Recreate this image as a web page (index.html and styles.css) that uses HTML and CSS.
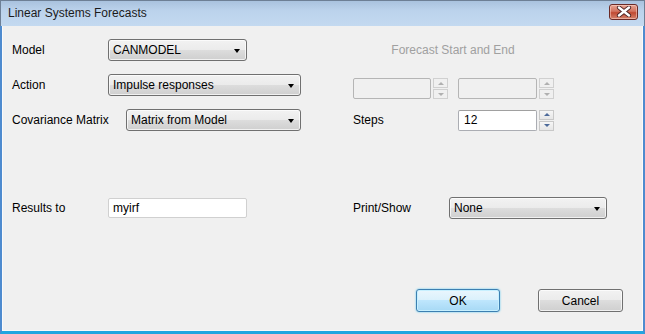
FILE: index.html
```html
<!DOCTYPE html>
<html lang="en">
<head>
  <meta charset="UTF-8">
  <title>Linear Systems Forecasts</title>
  <link rel="stylesheet" href="styles.css">
</head>
<body>
  <div class="window">
    <div class="titlebar">
      <span class="title">Linear Systems Forecasts</span>
      <div class="close">
        <svg width="16" height="11" viewBox="0 0 16 11">
          <path d="M3 1.5 L13 9.5 M13 1.5 L3 9.5" stroke="#4a2222" stroke-width="4.2" stroke-linecap="round"/>
          <path d="M3 1.5 L13 9.5 M13 1.5 L3 9.5" stroke="#ffffff" stroke-width="2.4" stroke-linecap="round"/>
        </svg>
      </div>
    </div>

    <div class="content">
      <div class="row r1">
        <div class="left">
          <span class="lbl">Model</span>
          <div class="combo model">CANMODEL<i class="arrow"></i></div>
        </div>
        <div class="right">
          <div class="caption">Forecast Start and End</div>
        </div>
      </div>

      <div class="row r2">
        <div class="left">
          <span class="lbl">Action</span>
          <div class="combo action">Impulse responses<i class="arrow"></i></div>
        </div>
        <div class="right spins">
          <div class="spinbox first">
            <div class="field off"></div>
            <div class="spin off"><span class="up"></span><span class="down"></span></div>
          </div>
          <div class="spinbox">
            <div class="field off wide"></div>
            <div class="spin off"><span class="up"></span><span class="down"></span></div>
          </div>
        </div>
      </div>

      <div class="row r3">
        <div class="left">
          <span class="lbl cov">Covariance Matrix</span>
          <div class="combo cov-combo">Matrix from Model<i class="arrow"></i></div>
        </div>
        <div class="right">
          <span class="lbl steps">Steps</span>
          <div class="spinbox">
            <div class="field wide">12</div>
            <div class="spin"><span class="up"></span><span class="down"></span></div>
          </div>
        </div>
      </div>

      <div class="row r4">
        <div class="left">
          <span class="lbl">Results to</span>
          <div class="field results">myirf</div>
        </div>
        <div class="right">
          <span class="lbl print">Print/Show</span>
          <div class="combo print-combo">None<i class="arrow"></i></div>
        </div>
      </div>

      <div class="row buttons">
        <button class="btn ok">OK</button>
        <button class="btn cancel">Cancel</button>
      </div>
    </div>
  </div>
</body>
</html>
```

FILE: styles.css
```css
body {
  margin: 0;
  font-family: 'Liberation Sans', Arial, sans-serif;
  font-size: 12px;
  color: #000;
  background: #f0f0f0;
}
.window {
  width: 645px;
  height: 334px;
  display: flex;
  flex-direction: column;
  box-sizing: border-box;
}
.titlebar {
  height: 26px;
  flex: none;
  display: flex;
  align-items: center;
  justify-content: space-between;
  padding: 0 6px 0 7px;
  box-sizing: border-box;
  background: linear-gradient(#a9c2de, #bcd3ec 40%, #c3d9f0);
  border-top: 1px solid #6d7f95;
  border-left: 1px solid #6d7f95;
  border-right: 1px solid #6d7f95;
}
.title {
  color: #1b1b1b;
  font-size: 12px;
  margin-top: -2px;
}
.close {
  width: 29px;
  height: 16px;
  margin-top: -4px;
  box-sizing: border-box;
  border: 1px solid #6b2a26;
  border-radius: 3px;
  background: linear-gradient(#e8a493, #d1725e 45%, #c04a32 55%, #d4826c);
  display: flex;
  align-items: center;
  justify-content: center;
  box-shadow: inset 0 0 0 1px rgba(255, 220, 210, 0.5);
}
.content {
  flex: 1;
  background: #f0f0f0;
  border-left: 2px solid #4e8bcf;
  border-right: 2px solid #4e8bcf;
  border-bottom: 3px solid #23a6e0;
  box-shadow: inset 1px 0 0 #fafafa, inset -1px 0 0 #fafafa, inset 0 -1px 0 #fafafa;
  padding: 13px 0 0 10px;
}
.row {
  display: flex;
  height: 22px;
  align-items: center;
}
.r2, .r3 { margin-top: 13px; }
.r4 { margin-top: 66px; }
.left {
  width: 341px;
  display: flex;
  align-items: center;
}
.right {
  display: flex;
  align-items: center;
}
.lbl {
  width: 96px;
  flex: none;
}
.lbl.cov { width: 114px; }
.lbl.steps { width: 105px; }
.caption {
  width: 200px;
  text-align: center;
  color: #a0a0a0;
  margin-top: -1px;
}
.combo {
  position: relative;
  height: 22px;
  box-sizing: border-box;
  border: 1px solid #707070;
  border-radius: 3px;
  background: linear-gradient(#f2f2f2, #ebebeb 50%, #dddddd 50%, #cfcfcf);
  box-shadow: inset 0 0 0 1px rgba(255, 255, 255, 0.7);
  padding: 0 0 0 4px;
  line-height: 20px;
}
.combo.model { width: 139px; }
.combo.action { width: 193px; }
.combo.cov-combo { width: 175px; }
.combo.print-combo { width: 158px; }
.arrow {
  position: absolute;
  right: 6px;
  top: 9px;
  width: 0;
  height: 0;
  border-left: 3.5px solid transparent;
  border-right: 3.5px solid transparent;
  border-top: 4px solid #000;
}
.field {
  height: 21px;
  box-sizing: border-box;
  border: 1px solid #abadb3;
  border-top-color: #a0a0a0;
  border-radius: 2px;
  background: #fff;
  padding-left: 5px;
  line-height: 19px;
  width: 78px;
}
.field.off {
  background: #f0f0f0;
  border-color: #b5b5b5;
}
.field.wide { width: 79px; }
.field.results {
  width: 139px;
  height: 20px;
  line-height: 18px;
  border-color: #d0d0d0;
  padding-left: 4px;
}
.spins { align-self: flex-start; margin-top: 4px; }
.spinbox {
  display: flex;
  align-items: flex-start;
}
.spinbox.first { margin-right: 10px; }
.spin {
  margin-left: 2px;
  width: 15px;
  display: flex;
  flex-direction: column;
  gap: 1px;
}
.spin span {
  height: 10px;
  box-sizing: border-box;
  border: 1px solid #c8c8c8;
  background: linear-gradient(#f6f6f6, #e6e6e6);
  display: flex;
  align-items: center;
  justify-content: center;
}
.spin span::after {
  content: "";
  width: 0;
  height: 0;
  border-left: 3px solid transparent;
  border-right: 3px solid transparent;
}
.spin .up::after { border-bottom: 3px solid #4d6a9a; }
.spin .down::after { border-top: 3px solid #4d6a9a; }
.spin.off span { background: #f0f0f0; border-color: #d0d0d0; }
.spin.off .up::after { border-bottom-color: #b0b0b0; }
.spin.off .down::after { border-top-color: #b0b0b0; }
.r3 .right .spinbox { margin-top: 0; }
.buttons {
  margin-top: 70px;
  height: 23px;
  padding-left: 404px;
}
.btn {
  height: 23px;
  box-sizing: border-box;
  font-family: 'Liberation Sans', Arial, sans-serif;
  font-size: 12px;
  color: #000;
  border-radius: 3px;
  padding: 0;
}
.ok {
  width: 84px;
  border: 1px solid #3c7fb1;
  background: linear-gradient(#eaf6fd, #d9f0fc 50%, #bee6fd 50%, #a7d9f5);
  box-shadow: inset 0 0 0 1px #c7f0ff, 0 0 2px #48c4f2;
}
.cancel {
  width: 85px;
  margin-left: 38px;
  border: 1px solid #707070;
  background: linear-gradient(#f2f2f2, #ebebeb 50%, #dddddd 50%, #cfcfcf);
  box-shadow: inset 0 0 0 1px rgba(255, 255, 255, 0.7);
}
```
